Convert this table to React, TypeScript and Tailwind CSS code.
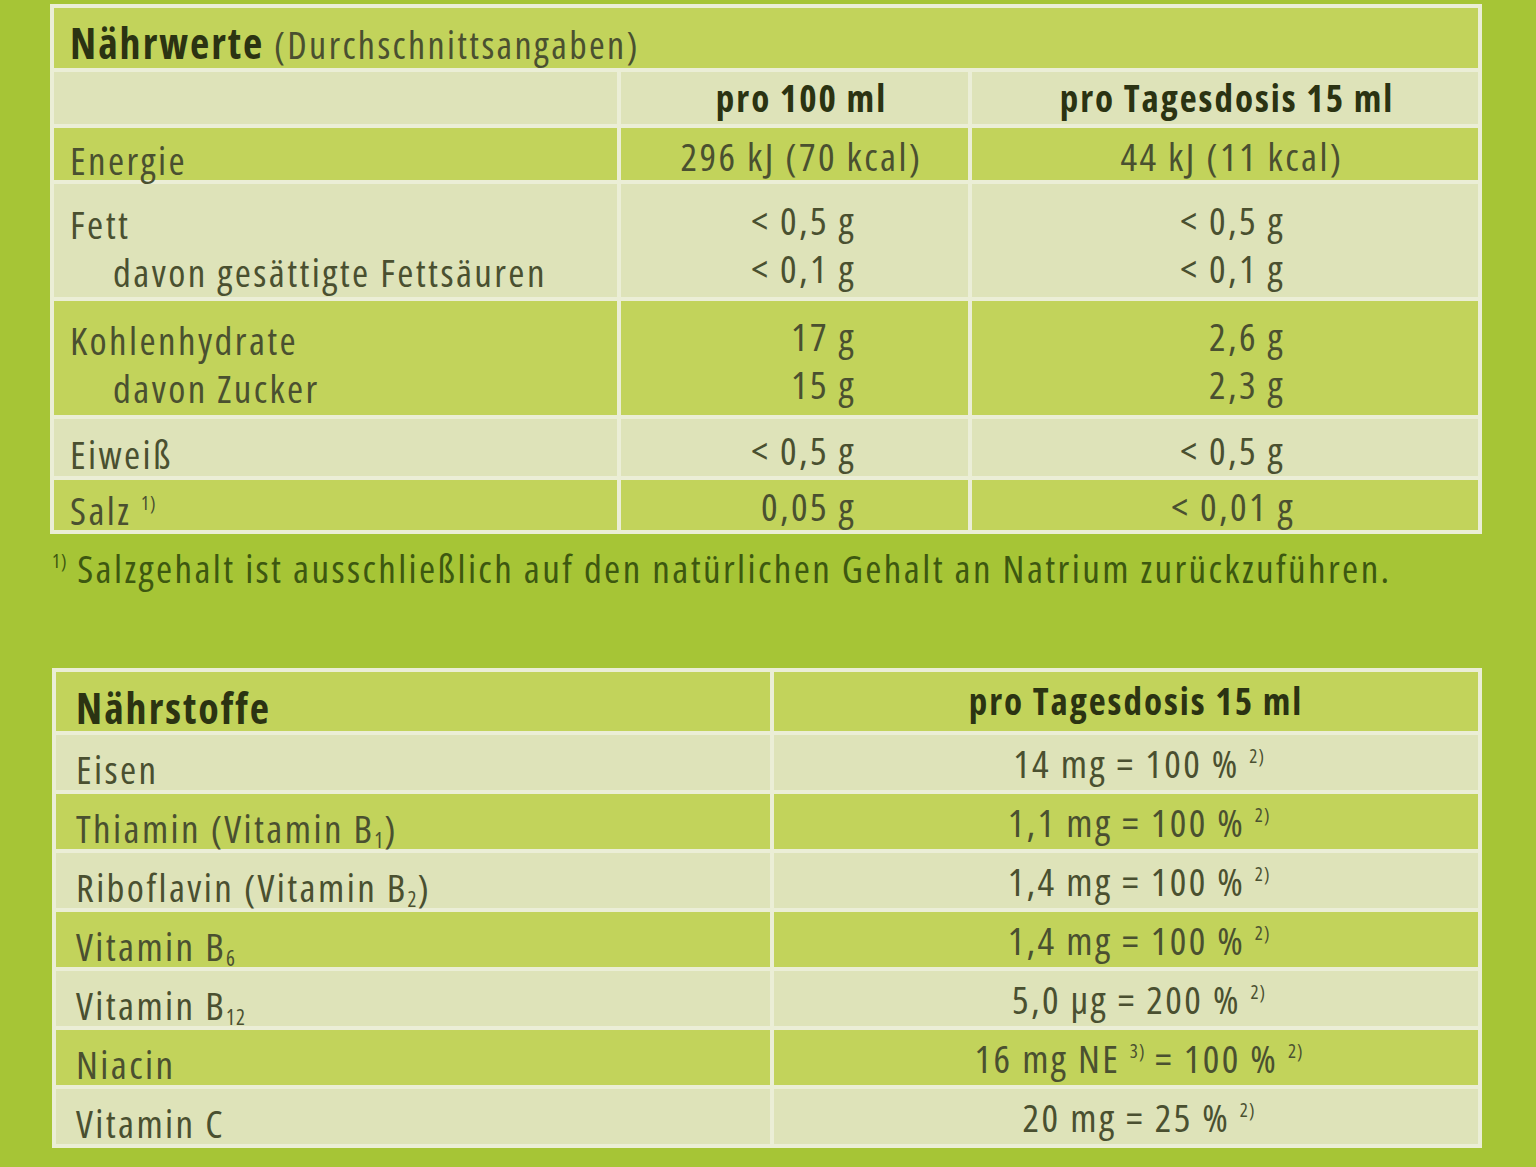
import React from "react";

const GREEN = "bg-[#c2d35b]";
const LIGHT = "bg-[#dee3b9]";

function Sup({ children }: { children: React.ReactNode }) {
  return <sup className="text-[19px] -top-[15px] tracking-[1px]">{children}</sup>;
}

function Sub({ children }: { children: React.ReactNode }) {
  return <sub className="text-[21px] tracking-[1px]">{children}</sub>;
}

interface Row1 {
  bg: string;
  h: string;
  pt: string;
  labels: React.ReactNode[];
  v1: string[];
  v2: string[];
  center?: boolean;
  pr2?: string;
}

const rows1: Row1[] = [
  { bg: GREEN, h: "h-[52px]", pt: "pt-[8px]", labels: ["Energie"], v1: ["296 kJ (70 kcal)"], v2: ["44 kJ (11 kcal)"], center: true },
  { bg: LIGHT, h: "h-[113px]", pt: "pt-[16px]", labels: ["Fett", "davon gesättigte Fettsäuren"], v1: ["< 0,5 g", "< 0,1 g"], v2: ["< 0,5 g", "< 0,1 g"] },
  { bg: GREEN, h: "h-[114px]", pt: "pt-[15px]", labels: ["Kohlenhydrate", "davon Zucker"], v1: ["17 g", "15 g"], v2: ["2,6 g", "2,3 g"] },
  { bg: LIGHT, h: "h-[57px]", pt: "pt-[11px]", labels: ["Eiweiß"], v1: ["< 0,5 g"], v2: ["< 0,5 g"] },
  {
    bg: GREEN,
    h: "h-[50px]",
    pt: "pt-[6px]",
    labels: [
      <>
        Salz <Sup>1)</Sup>
      </>,
    ],
    v1: ["0,05 g"],
    v2: ["< 0,01 g"],
    pr2: "pr-[183px]",
  },
];

const rows2: { label: React.ReactNode; value: React.ReactNode }[] = [
  { label: "Eisen", value: <>14 mg = 100 % <Sup>2)</Sup></> },
  { label: <>Thiamin (Vitamin B<Sub>1</Sub>)</>, value: <>1,1 mg = 100 % <Sup>2)</Sup></> },
  { label: <>Riboflavin (Vitamin B<Sub>2</Sub>)</>, value: <>1,4 mg = 100 % <Sup>2)</Sup></> },
  { label: <>Vitamin B<Sub>6</Sub></>, value: <>1,4 mg = 100 % <Sup>2)</Sup></> },
  { label: <>Vitamin B<Sub>12</Sub></>, value: <>5,0 µg = 200 % <Sup>2)</Sup></> },
  { label: "Niacin", value: <>16 mg NE <Sup>3)</Sup> = 100 % <Sup>2)</Sup></> },
  { label: "Vitamin C", value: <>20 mg = 25 % <Sup>2)</Sup></> },
];

export default function App() {
  return (
    <div className="w-[1536px] h-[1167px] overflow-hidden bg-[#a6c536] pt-[4px] pl-[50px] font-['Open_Sans',sans-serif] [font-stretch:75%] text-[39px] leading-[48px] tracking-[2.4px] text-[#4a5030]">
      {/* Nährwerte */}
      <div className="w-[1432px] grid grid-cols-[563px_347px_506px] gap-[4px] p-[4px] bg-[#ebeed6]">
        <div className={`col-span-3 h-[60px] pt-[11px] pl-[16px] whitespace-nowrap ${GREEN}`}>
          <span className="font-bold text-[42px] tracking-[2px] text-[#2b3312]">Nährwerte</span>{" "}
          <span className="text-[38px]">(Durchschnittsangaben)</span>
        </div>

        <div className={`h-[52px] ${LIGHT}`} />
        <div className={`h-[52px] pt-[2px] text-center font-bold text-[37px] tracking-[2px] text-[#2b3312] pl-[14px] ${LIGHT}`}>pro 100 ml</div>
        <div className={`h-[52px] pt-[2px] text-center font-bold text-[37px] tracking-[2px] text-[#2b3312] pl-[4px] ${LIGHT}`}>pro Tagesdosis 15 ml</div>

        {rows1.map((r, i) => (
          <React.Fragment key={i}>
            <div className={`${r.h} ${r.pt} pl-[16px] flex flex-col whitespace-nowrap ${r.bg}`}>
              {r.labels.map((l, j) => (
                <div key={j} className={j > 0 ? "pl-[43px]" : ""}>
                  {l}
                </div>
              ))}
            </div>
            <div className={`${r.h} ${r.pt} flex flex-col ${r.center ? "items-center pl-[14px]" : "items-end pr-[112px]"} ${r.bg}`}>
              {r.v1.map((v, j) => (
                <div key={j} className="-translate-y-[4px] whitespace-nowrap">{v}</div>
              ))}
            </div>
            <div className={`${r.h} ${r.pt} flex flex-col ${r.center ? "items-center pl-[14px]" : `items-end ${r.pr2 ?? "pr-[193px]"}`} ${r.bg}`}>
              {r.v2.map((v, j) => (
                <div key={j} className="-translate-y-[4px] whitespace-nowrap">{v}</div>
              ))}
            </div>
          </React.Fragment>
        ))}
      </div>

      <div className="mt-[10px] pl-[2px] whitespace-nowrap text-[#3d5810]">
        <Sup>1)</Sup> Salzgehalt ist ausschließlich auf den natürlichen Gehalt an Natrium zurückzuführen.
      </div>

      {/* Nährstoffe */}
      <div className="mt-[76px] ml-[2px] w-[1430px] grid grid-cols-[714px_704px] gap-[4px] p-[4px] bg-[#ebeed6]">
        <div className={`h-[59px] pt-[12px] pl-[20px] font-bold text-[42px] tracking-[2px] text-[#2b3312] ${GREEN}`}>Nährstoffe</div>
        <div className={`h-[59px] pt-[5px] pl-[20px] text-center font-bold text-[37px] tracking-[2px] text-[#2b3312] ${GREEN}`}>pro Tagesdosis 15 ml</div>
        {rows2.map((r, i) => {
          const bg = i % 2 === 0 ? LIGHT : GREEN;
          return (
            <React.Fragment key={i}>
              <div className={`h-[55px] pt-[10px] pl-[20px] whitespace-nowrap ${bg}`}>{r.label}</div>
              <div className={`h-[55px] pt-[4px] pl-[26px] text-center whitespace-nowrap ${bg}`}>{r.value}</div>
            </React.Fragment>
          );
        })}
      </div>
    </div>
  );
}
